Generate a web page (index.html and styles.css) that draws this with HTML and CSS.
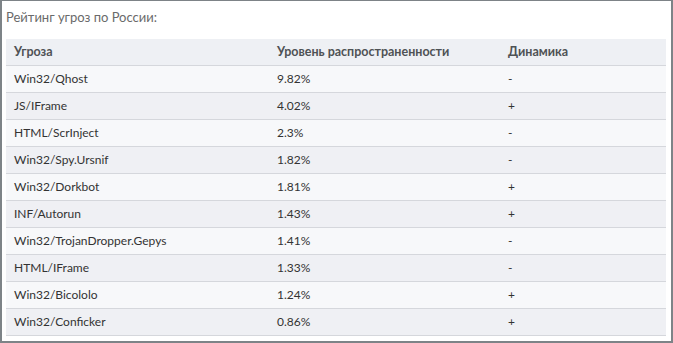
FILE: index.html
```html
<!DOCTYPE html>
<html lang="ru">
<head>
<meta charset="utf-8">
<link rel="stylesheet" href="styles.css">
</head>
<body>
<div class="frame">
  <div class="title">Рейтинг угроз по России:</div>
  <table class="rating">
    <thead>
      <tr><th class="c1">Угроза</th><th class="c2">Уровень распространенности</th><th class="c3">Динамика</th></tr>
    </thead>
    <tbody>
      <tr><td>Win32/Qhost</td><td>9.82%</td><td>-</td></tr>
      <tr><td>JS/IFrame</td><td>4.02%</td><td>+</td></tr>
      <tr><td>HTML/ScrInject</td><td>2.3%</td><td>-</td></tr>
      <tr><td>Win32/Spy.Ursnif</td><td>1.82%</td><td>-</td></tr>
      <tr><td>Win32/Dorkbot</td><td>1.81%</td><td>+</td></tr>
      <tr><td>INF/Autorun</td><td>1.43%</td><td>+</td></tr>
      <tr><td>Win32/TrojanDropper.Gepys</td><td>1.41%</td><td>-</td></tr>
      <tr><td>HTML/IFrame</td><td>1.33%</td><td>-</td></tr>
      <tr><td>Win32/Bicololo</td><td>1.24%</td><td>+</td></tr>
      <tr><td>Win32/Conficker</td><td>0.86%</td><td>+</td></tr>
    </tbody>
  </table>
</div>
</body>
</html>
```
FILE: styles.css
```css
html, body {
  margin: 0;
  padding: 0;
  background: #ffffff;
}
.frame {
  width: 673px;
  height: 343px;
  box-sizing: border-box;
  border: 2px solid #7d8387;
  border-top-width: 1px;
  padding: 0 5px 0 4px;
  font-family: "Lato", "Open Sans", sans-serif;
}
.title {
  height: 38px;
  box-sizing: border-box;
  padding-top: 7px;
  font-size: 13px;
  color: #6a6a6a;
  line-height: 18px;
}
.rating {
  width: 660px;
  border-collapse: collapse;
  font-size: 12px;
  color: #333333;
}
.rating th, .rating td {
  text-align: left;
  padding: 0 0 0 8px;
  height: 26px;
  border-bottom: 1px solid #d5d7dc;
  line-height: 16px;
}
.rating th {
  font-size: 12.5px;
  font-weight: 700;
  color: #4f5255;
  background: #eef0f4;
}
.rating .c1 { width: 255px; }
.rating .c2 { width: 223px; }
.rating tbody tr:nth-child(odd) td { background: #f7f8fa; }
.rating tbody tr:nth-child(even) td { background: #eff0f4; }
```
